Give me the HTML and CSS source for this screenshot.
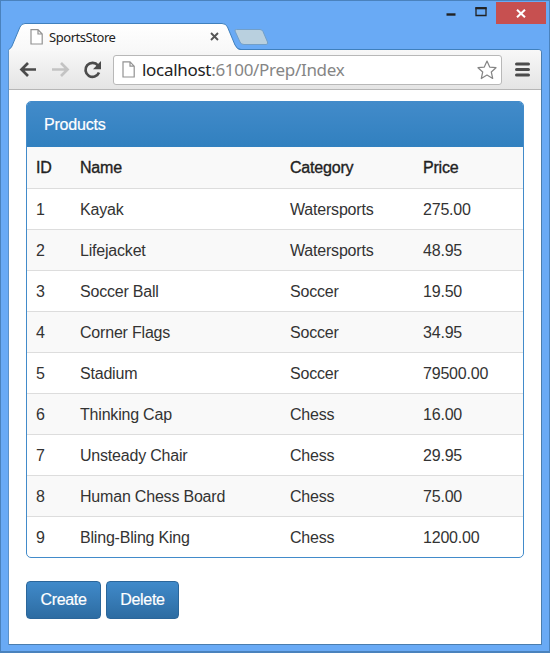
FILE: index.html
```html
<!DOCTYPE html>
<html lang="en">
<head>
<meta charset="utf-8">
<title>SportsStore</title>
<link rel="stylesheet" href="styles.css">
</head>
<body>
<div class="window">
  <header class="titlebar">
    <div class="tab">
      <svg class="tab-shape" width="262" height="28" viewBox="0 0 262 28">
        <defs><linearGradient id="tab" x1="0" y1="0" x2="0" y2="1"><stop offset="0" stop-color="#fff"/><stop offset="1" stop-color="#f8f8f8"/></linearGradient></defs>
        <path d="M0 28C1 25 3 26 4 23L12 4Q13.500 .5 17 .5H214Q218 .5 219.500 4L227 22Q229 27 233 27V28Z" fill="url(#tab)"/>
        <path d="M0 28C1 25 3 26 4 23L12 4Q13.500 .5 17 .5H214Q218 .5 219.500 4L227 22Q229 26.500 233 26.500H262" fill="none" stroke="#4080bd"/>
        <path d="M228.500 6.500H252Q254 6.500 255 8.500L259.500 19Q260.500 21.500 258 21.500H236Q233 21.500 232 19L227 8Q226.500 6.500 228.500 6.500Z" fill="#b9d0df" stroke="#729fc8"/>
      </svg>
      <svg class="tab-file" width="13" height="16" viewBox="0 0 13 16"><path d="M1 .7H8L12.200 5V15H1ZM8 .7V5H12.200" fill="#fff" stroke="#929292" stroke-width="1.200"/></svg>
      <span class="tab-title">SportsStore</span>
      <svg class="tab-close" width="9" height="9" viewBox="0 0 9 9"><path d="M1 1L8 8M8 1L1 8" stroke="#555" stroke-width="1.900"/></svg>
    </div>
    <div class="controls">
      <svg width="55" height="24" viewBox="0 0 55 24"><path d="M5.500 15.500H14.500" stroke="#222" stroke-width="2.400"/><path d="M35 9H45V16.500H35Z" fill="none" stroke="#222" stroke-width="1.300"/><path d="M34.400 9.200H45.600" stroke="#222" stroke-width="2.200"/></svg>
      <div class="close"><svg width="10" height="9" viewBox="0 0 10 9"><path d="M1 .7L9 8.300M9 .7L1 8.300" stroke="#fff" stroke-width="2"/></svg></div>
    </div>
  </header>
  <div class="browser">
    <nav class="toolbar">
      <svg class="nav-icons" width="106" height="40" viewBox="0 0 106 40">
        <g fill="none" stroke-width="2.700"><path d="M29 19.500H15M21 13L14.500 19.500L21 26" stroke="#4b4b4b"/><path d="M45 19.500H60M54 13L60.500 19.500L54 26" stroke="#c3c3c3"/><path d="M91 15.500A7 7 0 1 0 92 22.500" stroke="#4b4b4b"/></g>
        <path d="M94 11V19.300H86Z" fill="#4b4b4b"/>
      </svg>
      <div class="address">
        <svg width="13" height="17" viewBox="0 0 13 17"><path d="M1 .8H8L12.200 5.200V16H1ZM8 .8V5.200H12.200" fill="#fff" stroke="#929292" stroke-width="1.200"/></svg>
        <span class="url"><b>localhost</b>:6100/Prep/Index</span>
        <svg class="star" width="20" height="20" viewBox="0 0 20 20"><path d="M10 1L12.700 7.100L19 7.700L14.300 12L15.700 18.500L10 15.100L4.300 18.500L5.700 12L1 7.700L7.300 7.100Z" fill="#fff" stroke="#858585" stroke-width="1.200" stroke-linejoin="round"/></svg>
      </div>
      <svg class="menu" width="15" height="15" viewBox="0 0 15 15"><path d="M1.500 2H13.500M1.500 7.500H13.500M1.500 13H13.500" stroke="#4b4b4b" stroke-width="3" stroke-linecap="round"/></svg>
    </nav>
    <main class="page">
      <section class="panel">
        <div class="panel-heading">Products</div>
        <table>
          <colgroup><col class="c-id"><col class="c-name"><col class="c-cat"><col></colgroup>
          <thead><tr><th>ID</th><th>Name</th><th>Category</th><th>Price</th></tr></thead>
          <tbody>
            <tr><td>1</td><td>Kayak</td><td>Watersports</td><td>275.00</td></tr>
            <tr><td>2</td><td>Lifejacket</td><td>Watersports</td><td>48.95</td></tr>
            <tr><td>3</td><td>Soccer Ball</td><td>Soccer</td><td>19.50</td></tr>
            <tr><td>4</td><td>Corner Flags</td><td>Soccer</td><td>34.95</td></tr>
            <tr><td>5</td><td>Stadium</td><td>Soccer</td><td>79500.00</td></tr>
            <tr><td>6</td><td>Thinking Cap</td><td>Chess</td><td>16.00</td></tr>
            <tr><td>7</td><td>Unsteady Chair</td><td>Chess</td><td>29.95</td></tr>
            <tr><td>8</td><td>Human Chess Board</td><td>Chess</td><td>75.00</td></tr>
            <tr><td>9</td><td>Bling-Bling King</td><td>Chess</td><td>1200.00</td></tr>
          </tbody>
        </table>
      </section>
      <div class="actions"><button class="create">Create</button><button class="delete">Delete</button></div>
    </main>
  </div>
</div>
</body>
</html>
```
FILE: styles.css
```css
* { box-sizing: border-box; }
body { margin: 0; }
svg { display: block; flex: none; }
.window {
  width: 550px;
  height: 653px;
  padding: 0 7px 6px;
  border: 1px solid #4a82bd;
  border-bottom-width: 2px;
  background: #69aaf5;
  display: flex;
  flex-direction: column;
}
.titlebar {
  height: 48px;
  flex: none;
  display: flex;
  justify-content: space-between;
}
.tab {
  position: relative;
  width: 262px;
  height: 27px;
  margin-top: 22px;
  padding-left: 22px;
  display: flex;
  align-items: center;
}
.tab-shape { position: absolute; left: 0; top: 0; z-index: 1; }
.tab-file, .tab-title, .tab-close { position: relative; z-index: 2; }
.tab-title {
  width: 161px;
  margin-left: 6px;
  font: 13px "Noto Sans", sans-serif;
  letter-spacing: -0.45px;
  color: #222;
}
.controls { display: flex; margin-right: -4px; }
.controls > svg { margin-top: -2px; }
.close {
  width: 50px;
  height: 22px;
  margin-top: 1px;
  background: #c75050;
  display: flex;
  align-items: center;
  justify-content: center;
}
.browser {
  flex: 1;
  min-height: 0;
  border: 1px solid #4b7dad;
  border-left-color: #5b91c9;
  border-top-color: #4080bd;
  border-radius: 3px 4px 1px 1px;
  background: #fff;
  display: flex;
  flex-direction: column;
}
.toolbar {
  height: 40px;
  flex: none;
  border-bottom: 1px solid #b6b6b6;
  border-radius: 3px 3px 0 0;
  background: linear-gradient(#f8f8f8, #e4e4e4);
  display: flex;
  align-items: center;
}
.nav-icons { margin-left: -2px; }
.address {
  width: 389px;
  height: 30px;
  border: 1px solid #b8b8b8;
  border-radius: 3px;
  background: #fff;
  display: flex;
  align-items: center;
  padding: 0 4px 0 8px;
}
.url {
  flex: 1;
  margin-left: 7px;
  font: 17px "Noto Sans", sans-serif;
  letter-spacing: -0.3px;
  color: #858585;
  white-space: nowrap;
}
.url b { font-weight: 400; color: #222; }
.menu { margin-left: 13px; }
.page {
  padding: 11px 17px 0;
  font: 16px/20px "Liberation Sans", Arial, sans-serif;
  letter-spacing: -0.2px;
  color: #333;
}
.panel {
  width: 498px;
  height: 457px;
  border: 1px solid #428bca;
  border-radius: 5px;
  overflow: hidden;
}
.panel-heading {
  height: 45px;
  padding: 13px 17px 12px;
  line-height: 20px;
  color: #fff;
  -webkit-text-stroke: 0.2px #fff;
  background: linear-gradient(#428bca, #3180bf);
}
table { width: 100%; border-collapse: collapse; table-layout: fixed; }
.c-id { width: 44px; }
.c-name { width: 210px; }
.c-cat { width: 133px; }
th, td { height: 41px; padding: 2px 9px 0; text-align: left; font-weight: 400; }
th { color: #222; -webkit-text-stroke: 0.35px #222; }
td { border-top: 1px solid #ddd; }
thead tr, tbody tr:nth-child(even) { background: #f9f9f9; }
.actions { display: flex; gap: 5px; margin-top: 23px; }
button {
  height: 38px;
  padding: 0;
  border: 1px solid #2b669a;
  border-radius: 4px;
  background: linear-gradient(#408aca, #2d6ca2);
  color: #fff;
  font: inherit;
  letter-spacing: -0.3px;
  -webkit-text-stroke: 0.2px #fff;
}
.create { width: 75px; }
.delete { width: 73px; }
```
